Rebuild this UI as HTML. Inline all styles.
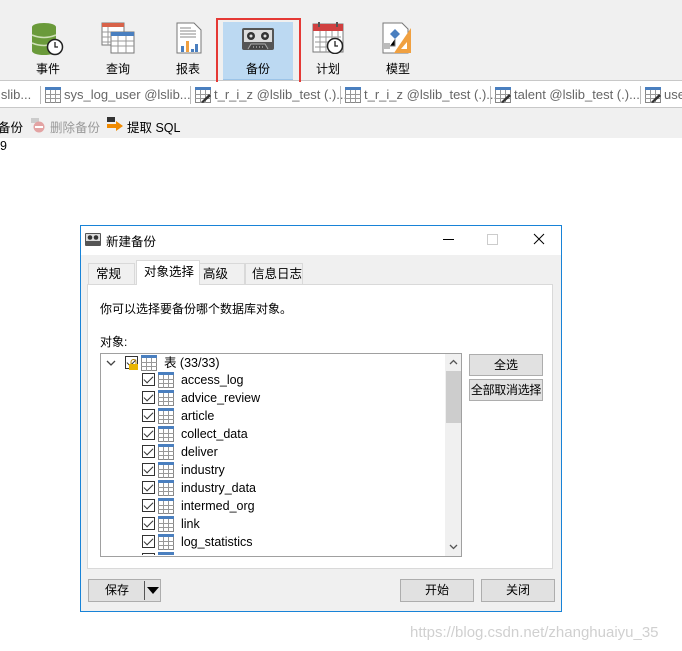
<!DOCTYPE html>
<html><head><meta charset="utf-8"><style>
*{box-sizing:border-box;margin:0;padding:0}
body{width:682px;height:651px;background:#fff;font-family:"Liberation Sans","Noto Sans CJK SC",sans-serif;font-size:12px;color:#000;position:relative;overflow:hidden}
.abs{position:absolute}
.tb{left:0;top:0;width:682px;height:81px;background:#f0f0f0;border-bottom:1px solid #c8c8c8}
.tl{font-size:12px;text-align:center;width:60px}
.tabs{left:0;top:82px;width:682px;height:26px;background:#fff;border-bottom:1px solid #c8c8c8;color:#666;font-size:12.5px;white-space:nowrap}
.act{left:0;top:108px;width:682px;height:30px;background:#f0f0f0}
.dlg{left:80px;top:225px;width:482px;height:387px;border:1px solid #1883d7;background:#f0f0f0}
.btn{position:absolute;background:#e1e1e1;border:1px solid #adadad;text-align:center;font-size:12px;line-height:20px}
.row{position:absolute;left:42px;height:18px;line-height:18px;font-size:12.5px;white-space:nowrap}
.row svg{margin-right:3px}
.cb{display:inline-block;width:13px;height:13px;border:1px solid #333;vertical-align:middle;position:relative;top:-1px;background:#fff}
.cb:after{content:"";position:absolute;left:3px;top:0px;width:4px;height:8px;border:solid #333;border-width:0 1.5px 1.5px 0;transform:rotate(45deg)}
</style></head><body>
<svg width="0" height="0" style="position:absolute"><defs>
<symbol id="t" viewBox="0 0 16 16"><rect x="0.5" y="0.5" width="15" height="15" fill="#fff" stroke="#888"/><rect x="0" y="0" width="16" height="3" fill="#4a7fbf"/><path d="M0 7.5H16M0 11.5H16M5.5 3V16M10.5 3V16" stroke="#999" stroke-width="1"/></symbol>
</defs></svg>

<div class="abs tb"></div>
<svg class="abs" style="left:30px;top:22px" width="36" height="34"><ellipse cx="14" cy="5" rx="12" ry="4" fill="#6a9a3a"/><rect x="2" y="5" width="24" height="24" fill="#6a9a3a"/><ellipse cx="14" cy="29" rx="12" ry="4" fill="#6a9a3a"/><path d="M2 13Q14 18 26 13M2 21Q14 26 26 21" stroke="#cfe0b8" fill="none" stroke-width="1.5"/><circle cx="25" cy="25" r="7.5" fill="#fff" stroke="#222" stroke-width="1.5"/><path d="M25 20V25H28" stroke="#222" fill="none" stroke-width="1.3"/></svg>
<div class="abs tl" style="left:18px;top:60px">事件</div>
<svg class="abs" style="left:101px;top:22px" width="34" height="32"><rect x="1" y="1" width="22" height="22" fill="#fff" stroke="#777"/><rect x="1" y="1" width="22" height="4" fill="#d8634a"/><rect x="10" y="10" width="23" height="21" fill="#fff" stroke="#777"/><rect x="10" y="10" width="23" height="4" fill="#4a7fbf"/><path d="M10 19H33M10 24H33M17 14V31M25 14V31M1 10H10M1 15H10M1 20H10M7 5V23" stroke="#999"/></svg>
<div class="abs tl" style="left:88px;top:60px">查询</div>
<svg class="abs" style="left:176px;top:22px" width="26" height="32"><path d="M1 1H18L25 8V31H1Z" fill="#fff" stroke="#777"/><path d="M4 6H15M4 9H20M4 12H20M4 15H20" stroke="#888"/><rect x="5" y="24" width="3" height="6" fill="#4a7fbf"/><rect x="10" y="19" width="3" height="11" fill="#f0a040"/><rect x="15" y="27" width="3" height="3" fill="#4a7fbf"/><rect x="19" y="22" width="3" height="8" fill="#4a7fbf"/></svg>
<div class="abs tl" style="left:158px;top:60px">报表</div>
<div class="abs" style="left:223px;top:22px;width:70px;height:58px;background:#bcd9f2;border-bottom:1px solid #9cc4e8"></div>
<div class="abs" style="left:216px;top:18px;width:85px;height:71px;border:2px solid #e53935"></div>
<svg class="abs" style="left:242px;top:28px" width="32" height="22"><rect x="0" y="0" width="32" height="22" rx="2" fill="#555"/><rect x="2" y="2" width="28" height="12" fill="#ddd"/><circle cx="9" cy="8" r="4" fill="#333"/><circle cx="9" cy="8" r="1.5" fill="#ddd"/><circle cx="23" cy="8" r="4" fill="#333"/><circle cx="23" cy="8" r="1.5" fill="#ddd"/><path d="M6 21L9 16H23L26 21" fill="#444" stroke="#aaa"/><path d="M11 19H21" stroke="#ddd" stroke-dasharray="1 2"/></svg>
<div class="abs tl" style="left:228px;top:60px">备份</div>
<svg class="abs" style="left:312px;top:22px" width="32" height="32"><rect x="1" y="2" width="30" height="28" fill="#fff" stroke="#777"/><rect x="1" y="2" width="30" height="7" fill="#d04040"/><path d="M7 0V5M25 0V5" stroke="#555" stroke-width="2"/><path d="M3 15H29M3 20H29M3 25H29M8 9V30M14 9V30M20 9V30M26 9V30" stroke="#999"/><circle cx="23" cy="24" r="7.5" fill="#fff" stroke="#222" stroke-width="1.5"/><path d="M23 19V24H26" stroke="#222" fill="none" stroke-width="1.3"/></svg>
<div class="abs tl" style="left:298px;top:60px">计划</div>
<svg class="abs" style="left:382px;top:22px" width="32" height="34"><path d="M1 1H20L26 7V31H1Z" fill="#fff" stroke="#777"/><path d="M8 12L13 7L18 12L13 17Z" fill="#4a7fbf"/><path d="M13 17V24H8M3 24H8" stroke="#777"/><rect x="2" y="21" width="6" height="6" fill="#bbb"/><path d="M29 6V31H12Z" fill="#f0a040"/><path d="M25 20V27H19Z" fill="#fff"/></svg>
<div class="abs tl" style="left:368px;top:60px">模型</div>

<div class="abs tabs"></div>
<div class="abs" style="left:0;top:86px;font-size:13px;color:#666;white-space:nowrap;line-height:18px">
<span class="abs" style="left:-2px">lslib...</span>
<span class="abs" style="left:40px;top:0;border-left:1px solid #bbb;height:18px"></span>
<svg class="abs" style="left:45px;top:1px" width="16" height="16"><use href="#t"/></svg>
<span class="abs" style="left:64px">sys_log_user @lslib...</span>
<span class="abs" style="left:190px;border-left:1px solid #bbb;height:18px"></span>
<svg class="abs" style="left:195px;top:1px" width="16" height="16"><use href="#t"/><path d="M6 15L14 7L16 9L8 16Z" fill="#333"/></svg>
<span class="abs" style="left:214px">t_r_i_z @lslib_test (.)...</span>
<span class="abs" style="left:340px;border-left:1px solid #bbb;height:18px"></span>
<svg class="abs" style="left:345px;top:1px" width="16" height="16"><use href="#t"/></svg>
<span class="abs" style="left:364px">t_r_i_z @lslib_test (.)...</span>
<span class="abs" style="left:490px;border-left:1px solid #bbb;height:18px"></span>
<svg class="abs" style="left:495px;top:1px" width="16" height="16"><use href="#t"/><path d="M6 15L14 7L16 9L8 16Z" fill="#333"/></svg>
<span class="abs" style="left:514px">talent @lslib_test (.)...</span>
<span class="abs" style="left:640px;border-left:1px solid #bbb;height:18px"></span>
<svg class="abs" style="left:645px;top:1px" width="16" height="16"><use href="#t"/><path d="M6 15L14 7L16 9L8 16Z" fill="#333"/></svg>
<span class="abs" style="left:664px">user</span>
</div>
<div class="abs act"></div>
<div class="abs" style="left:-2px;top:117px;font-size:12.5px">备份</div>
<svg class="abs" style="left:30px;top:117px" width="16" height="16"><rect x="1" y="1" width="8" height="5" fill="#ccc"/><circle cx="9" cy="10" r="5.5" fill="#e3a3a3"/><rect x="5" y="9" width="8" height="2" fill="#fff"/></svg>
<div class="abs" style="left:50px;top:117px;font-size:12.5px;color:#999">删除备份</div>
<svg class="abs" style="left:106px;top:116px" width="18" height="16"><rect x="1" y="1" width="8" height="5" fill="#333"/><path d="M1 8H10V5L17 10L10 15V12H1Z" fill="#f08a00"/></svg>
<div class="abs" style="left:127px;top:117px;font-size:12.5px">提取 SQL</div>
<div class="abs" style="left:0;top:139px;font-size:12.5px">9</div>

<div class="abs dlg">
 <div class="abs" style="left:0;top:0;width:480px;height:29px;background:#fff"></div>
 <svg class="abs" style="left:4px;top:7px" width="16" height="13"><rect width="16" height="13" rx="1" fill="#555"/><rect x="1" y="1" width="14" height="7" fill="#ddd"/><circle cx="5" cy="4.5" r="2.3" fill="#333"/><circle cx="11" cy="4.5" r="2.3" fill="#333"/></svg>
 <div class="abs" style="left:25px;top:5px;font-size:12.5px">新建备份</div>
 <div class="abs" style="left:362px;top:13px;width:11px;border-top:1px solid #000"></div>
 <div class="abs" style="left:406px;top:8px;width:11px;height:11px;border:1px solid #ccc"></div>
 <svg class="abs" style="left:452px;top:7px" width="12" height="12"><path d="M1 1L11 11M11 1L1 11" stroke="#000"/></svg>
 <div class="abs" style="left:6px;top:58px;width:466px;height:285px;background:#fff;border:1px solid #d9d9d9"></div>
 <div class="abs" style="left:7px;top:37px;width:47px;height:21px;border:1px solid #d9d9d9;border-bottom:none;background:#f0f0f0;font-size:12.5px;line-height:20px;padding-left:7px">常规</div>
 <div class="abs" style="left:55px;top:34px;width:64px;height:25px;border:1px solid #d9d9d9;border-bottom:none;background:#fff;font-size:12.5px;line-height:22px;padding-left:7px">对象选择</div>
 <div class="abs" style="left:119px;top:37px;width:45px;height:21px;border:1px solid #d9d9d9;border-bottom:none;border-left:none;background:#f0f0f0;font-size:12.5px;line-height:20px;padding-left:3px">高级</div>
 <div class="abs" style="left:164px;top:37px;width:58px;height:21px;border:1px solid #d9d9d9;border-bottom:none;background:#f0f0f0;font-size:12.5px;line-height:20px;padding-left:6px">信息日志</div>
 <div class="abs" style="left:19px;top:74px;font-size:12px">你可以选择要备份哪个数据库对象。</div>
 <div class="abs" style="left:19px;top:107px;font-size:12px">对象:</div>
 <div class="abs" style="left:19px;top:127px;width:362px;height:204px;border:1px solid #a0a0a0;background:#fff;overflow:hidden">
  <div class="abs" style="left:344px;top:0;width:17px;height:202px;background:#f0f0f0"></div>
  <div class="abs" style="left:345px;top:17px;width:15px;height:52px;background:#cdcdcd"></div>
  <svg class="abs" style="left:348px;top:5px" width="9" height="6"><path d="M1 5L4.5 1.5L8 5" stroke="#555" fill="none" stroke-width="1.3"/></svg>
  <svg class="abs" style="left:348px;top:190px" width="9" height="6"><path d="M1 1L4.5 4.5L8 1" stroke="#555" fill="none" stroke-width="1.3"/></svg>
  <svg class="abs" style="left:5px;top:6px" width="10" height="7"><path d="M1 1L5 5L9 1" stroke="#444" fill="none" stroke-width="1.3"/></svg>
  <div class="row" style="left:24px;top:0"><span class="cb"></span><svg style="position:absolute;left:4px;top:5px" width="9" height="11"><path d="M2 5V3A2.5 2.5 0 0 1 7 3V5" stroke="#b08000" fill="none"/><rect x="0" y="5" width="9" height="6" fill="#e8b400"/></svg> <svg width="16" height="16" style="vertical-align:middle;position:relative;top:-1px"><use href="#t"/></svg> 表 (33/33)</div>
 </div>
 <div class="abs" style="left:19px;top:127px;width:344px;height:202px;overflow:hidden">
  <div class="row" style="top:18px"><span class="cb"></span> <svg width="16" height="16" style="vertical-align:middle;position:relative;top:-1px"><use href="#t"/></svg> access_log</div>
  <div class="row" style="top:36px"><span class="cb"></span> <svg width="16" height="16" style="vertical-align:middle;position:relative;top:-1px"><use href="#t"/></svg> advice_review</div>
  <div class="row" style="top:54px"><span class="cb"></span> <svg width="16" height="16" style="vertical-align:middle;position:relative;top:-1px"><use href="#t"/></svg> article</div>
  <div class="row" style="top:72px"><span class="cb"></span> <svg width="16" height="16" style="vertical-align:middle;position:relative;top:-1px"><use href="#t"/></svg> collect_data</div>
  <div class="row" style="top:90px"><span class="cb"></span> <svg width="16" height="16" style="vertical-align:middle;position:relative;top:-1px"><use href="#t"/></svg> deliver</div>
  <div class="row" style="top:108px"><span class="cb"></span> <svg width="16" height="16" style="vertical-align:middle;position:relative;top:-1px"><use href="#t"/></svg> industry</div>
  <div class="row" style="top:126px"><span class="cb"></span> <svg width="16" height="16" style="vertical-align:middle;position:relative;top:-1px"><use href="#t"/></svg> industry_data</div>
  <div class="row" style="top:144px"><span class="cb"></span> <svg width="16" height="16" style="vertical-align:middle;position:relative;top:-1px"><use href="#t"/></svg> intermed_org</div>
  <div class="row" style="top:162px"><span class="cb"></span> <svg width="16" height="16" style="vertical-align:middle;position:relative;top:-1px"><use href="#t"/></svg> link</div>
  <div class="row" style="top:180px"><span class="cb"></span> <svg width="16" height="16" style="vertical-align:middle;position:relative;top:-1px"><use href="#t"/></svg> log_statistics</div>
  <div class="row" style="top:198px"><span class="cb"></span> <svg width="16" height="16" style="vertical-align:middle;position:relative;top:-1px"><use href="#t"/></svg> message</div>
 </div>
 <div class="btn" style="left:388px;top:128px;width:74px;height:22px">全选</div>
 <div class="btn" style="left:388px;top:153px;width:74px;height:22px;font-size:12px;white-space:nowrap;letter-spacing:-0.3px">全部取消选择</div>
 <div class="btn" style="left:7px;top:353px;width:73px;height:23px;text-align:left;padding-left:16px">保存</div>
 <div class="abs" style="left:63px;top:355px;height:19px;border-left:1px solid #555"></div>
 <svg class="abs" style="left:66px;top:361px" width="12" height="7"><path d="M0 0H12L6 7Z" fill="#000"/></svg>
 <div class="btn" style="left:319px;top:353px;width:74px;height:23px">开始</div>
 <div class="btn" style="left:400px;top:353px;width:74px;height:23px">关闭</div>
</div>
<div class="abs" style="left:410px;top:624px;font-size:15px;color:#d0d0d0;font-family:'Liberation Sans',sans-serif">https://blog.csdn.net/zhanghuaiyu_35</div>
</body></html>
